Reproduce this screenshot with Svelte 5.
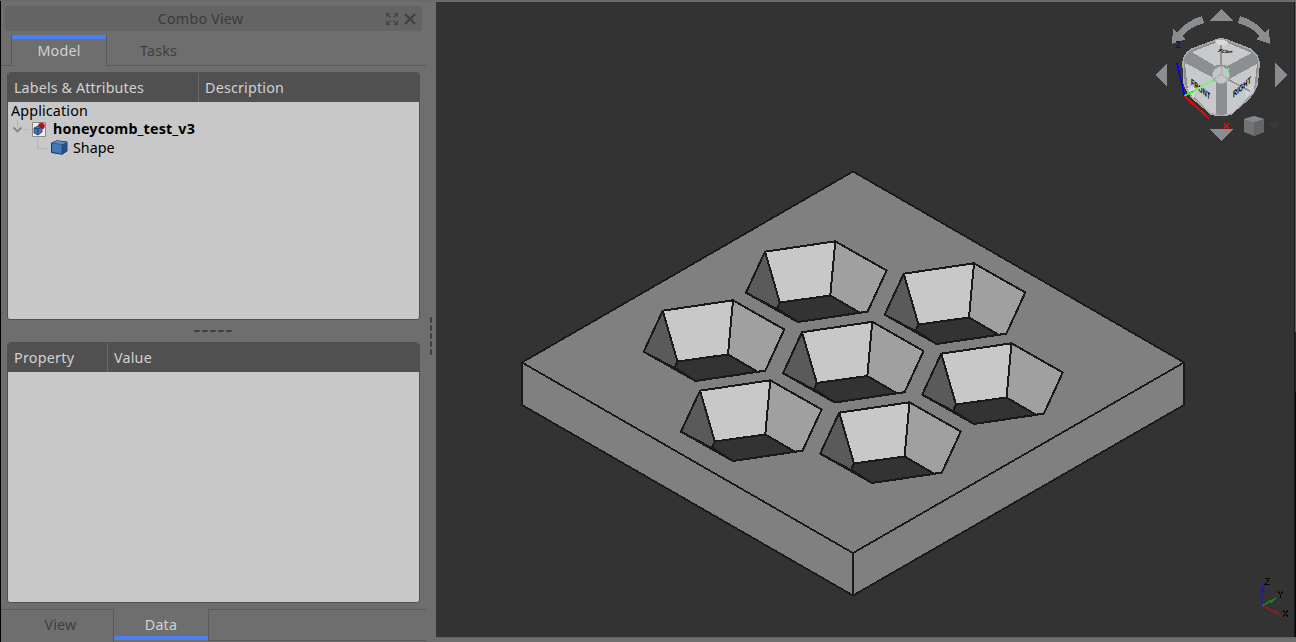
<script>
  const cells = [[102.3, -59], [241, -37], [0, 0], [139.3, 21.5], [278.5, 43], [37.3, 80], [176.5, 102]];
</script>

<div class="app">
  <aside>
    <header class="title"><span class="caption">Combo View</span>
      <svg class="float" width="12" height="12" viewBox="0 0 12 12"><path d="M.5 4V.5H4M.5 .5L4.500 4.500M8 .5H11.500V4M11.500 .5L7.500 4.500M.5 8V11.500H4M.5 11.500L4.500 7.500M8 11.500H11.500V8M11.500 11.500L7.500 7.500" /></svg>
      <svg class="close" width="12" height="12" viewBox="0 0 12 12"><path d="M1 1L11 11M11 1L1 11" /></svg>
    </header>
    <nav class="top"><div class="lead"></div><div class="tab active">Model</div><div class="tab rest">Tasks</div></nav>
    <section class="table tree">
      <div class="head"><div class="c1">Labels &amp; Attributes</div><div>Description</div></div>
      <div class="body">
        <div class="row app-row">Application</div>
        <div class="row doc">
          <svg width="45" height="38" viewBox="0 0 45 38">
            <path d="M9.5 0V8M15 9.500H20M29.500 18V28.500H40" stroke="#b4b4b4" fill="none" />
            <path d="M5.500 7.500L9.500 11.500L13.500 7.500" stroke="#858585" stroke-width="1.9" fill="none" />
            <path d="M24.500 2.500H37.500V16.500H24.500Z" fill="#eee" stroke="#888" />
            <circle cx="33.500" cy="6" r="3.300" fill="#c90e16" />
            <path d="M26 8L30 6L34 7V12L30 15L26 13Z" fill="#4675b0" stroke="#152c50" stroke-width=".7" />
            <path d="M26 8L30 9L34 7M30 9V15" stroke="#152c50" stroke-width=".7" fill="none" />
          </svg>
          <strong>honeycomb_test_v3</strong>
        </div>
        <div class="row shape">
          <svg width="17" height="15" viewBox="0 0 17 15">
            <path d="M.5 3L6 .8L16 2V11L11 14.300L.5 12.500Z" fill="#427ab7" stroke="#17355f" />
            <path d="M1 3L6 1L15.500 2.300L11 4.500Z" fill="#6390c0" /><path d="M11 4.500L15.500 2.300V11L11 14Z" fill="#234f8d" />
            <path d="M1 3L11 4.500V14" fill="none" stroke="#204777" stroke-width=".7" />
          </svg><span>Shape</span>
        </div>
      </div>
    </section>
    <div class="grip"><i></i><i></i><i></i><i></i><i></i></div>
    <section class="table props"><div class="head"><div class="c1">Property</div><div>Value</div></div><div class="body"></div></section>
    <nav class="bottom"><div class="tab view">View</div><div class="tab data">Data</div><div class="rest"></div></nav>
  </aside>
  <div class="splitter"><i></i><i></i><i></i><i></i><i></i></div>
  <main>
    <svg class="scene" width="858" height="635" viewBox="436 2 858 635">
      <g class="plate" shape-rendering="crispEdges">
        <path d="M853 171.500L1184 362.500V405L853 595.500L522 405V362.500Z" />
        <path d="M522 362.500L853 553L1184 362.500M853 553V595.500" />
      </g>
      {#each cells as [x, y]}
        <g class="cell" transform={`translate(${x} ${y})`} shape-rendering="crispEdges">
          <path fill="#333333" d="M677.500 361.500L728 354.500L757.500 371.700L695.500 381L674.500 367.500Z" />
          <path fill="#5a5a5a" d="M662.700 310.700L677.500 361.500L674.500 368L643.700 351.700Z" />
          <path fill="#c8c8c8" d="M662.700 310.700L733 300.300L728 354.500L677.500 361.500Z" />
          <path fill="#a0a0a0" d="M733 300.300L784.300 329.500L765.300 370.700L757.500 371.700L728 354.500Z" />
          <path fill="none" d="M662.700 310.700L733 300.300L784.300 329.500L765.300 370.700L695.500 381L643.700 351.700Z" />
        </g>
      {/each}
      <g fill="#898d8f" shape-rendering="crispEdges">
        <path d="M1221.500 9L1233 21H1210ZM1221.500 141L1210 129H1233ZM1155.500 75L1167 64V86ZM1287 75L1275 63V87Z" />
        <path d="M1202 16L1204 23Q1190 27 1182 36L1186 39L1172 44L1173 29L1177 32Q1188 20 1202 16Z" />
        <path d="M1240 16L1238 23Q1252 27 1260 36L1256 39L1270 44L1269 29L1265 32Q1254 20 1240 16Z" />
      </g>
      <g shape-rendering="crispEdges">
        <path d="M1216 40Q1221 38 1227 40L1250 49Q1260 55 1259 66L1257 85Q1253 96 1245 102L1231 114Q1221 117 1211 114L1196 101Q1187 94 1184 83L1183 63Q1183 54 1192 49Z" fill="#8b8f91" stroke="#a9abac" stroke-width="1.500" />
        <path d="M1192 52L1215 43Q1221 40 1228 43L1252 53L1227 66Q1221 63 1215 66ZM1185 63L1214 78Q1217 82 1216 85V114L1210 113L1188 91ZM1257 64L1229 79Q1226 82 1227 85V114L1232 113L1254 91Z" fill="#c8c9cb" />
        <path d="M1215 41Q1221 38 1228 42L1224 46H1219ZM1187 88L1195 87L1194 99ZM1253 87L1246 89L1246 98Z" fill="#d8d9da" />
        <path d="M1221 45V69M1227 79L1250 91M1215 79L1189 94" stroke="#929292" stroke-width="1.500" />
        <circle cx="1221" cy="75" r="8.500" fill="#c3c5c6" stroke="#a3a5a6" />
        <path d="M1221 67V74L1214 79M1221 74L1228 79" fill="none" stroke="#aaaeb0" />
      </g>
      <g class="face" fill="#000">
        <text transform="matrix(1 .16 -.7 .5 1216 51.500)" font-size="7">TOP</text>
        <text transform="matrix(.76 .62 0 1.15 1191 84.500)" font-size="8" textLength="25" lengthAdjust="spacingAndGlyphs">FRONT</text>
        <text transform="matrix(.82 -.72 0 1.15 1233 98)" font-size="8" textLength="22" lengthAdjust="spacingAndGlyphs">RIGHT</text>
      </g>
      <g fill="none" shape-rendering="crispEdges" stroke-width="1.700">
        <path d="M1184.500 96L1177 63" stroke="#00f" /><path d="M1184.500 96L1209 118.500" stroke="red" />
        <path d="M1184.500 96L1194 91" stroke="#19ff19" /><path d="M1194 91L1213 80" stroke="#78f578" />
        <path d="M1176 41.500H1180.500L1176.500 47.500H1181" stroke="#00d" stroke-width="1" />
        <path d="M1224 68L1226.500 71.500L1229 68M1226.500 71V75" stroke="#80ef9b" stroke-width="1" />
        <path d="M1224 123L1229 129M1229 123L1224 129" stroke="red" stroke-width="1.300" />
      </g>
      <path d="M1244 119L1254 116L1264 119V132L1254 136L1244 132Z" fill="#707476" /><path d="M1244 119L1254 116L1264 119L1254 122.500Z" fill="#85898b" /><path d="M1254 122.500L1264 119V132L1254 136Z" fill="#626668" />
      <path d="M1268 123H1280L1274 129Z" fill="#3a3b3d" />
      <g fill="none" shape-rendering="crispEdges">
        <path d="M1262.500 605V585" stroke="#202080" stroke-width="1.500" /><path d="M1260 592L1262.500 584L1265 592Z" fill="#202080" />
        <path d="M1262.500 605.500L1281 616" stroke="#892020" stroke-width="1.500" /><path d="M1273 612L1275 609L1281 616Z" fill="#892020" />
        <path d="M1262.500 605.500L1276 598" stroke="#208020" stroke-width="1.500" /><path d="M1268 601L1276 598L1271 604Z" fill="#208020" />
        <path d="M1265 578.500H1269.500L1265 584.500H1270M1278 591L1280.500 594.500L1283 591M1280.500 594V598M1283 610L1288 617M1288 610L1283 617" stroke="#090909" />
      </g>
    </svg>
    <div class="edge"></div>
  </main>
</div>

<style>
  :global(body) { margin: 0; overflow: hidden; background: #6e6e6e; }
  * { box-sizing: border-box; }
  .app { display: flex; width: 1296px; height: 642px; overflow: hidden; background: #6e6e6e; color: #d2d2d2; font: 14.3px/20px "Noto Sans", "Open Sans", sans-serif; border-top: 1px solid #696969; }
  aside { display: flex; flex-direction: column; width: 426px; border-left: 1px solid #000; }
  .title { display: flex; align-items: center; height: 25px; margin: 5px 4px 0 4px; background: #646464; border-radius: 3px; color: #3b3b3b; }
  .caption { flex: 1; text-align: center; padding-left: 10px; letter-spacing: .2px; }
  .title svg { fill: none; }
  .float { stroke: #454545; stroke-width: 1.4; margin-right: 6px; }
  .close { stroke: #414141; stroke-width: 2.4; margin-right: 6px; }
  nav { display: flex; }
  .top { height: 31px; margin-top: 4px; }
  .lead { width: 10px; border-bottom: 1px solid #5a5a5a; }
  .tab { text-align: center; letter-spacing: .2px; }
  .active { width: 96px; border: solid #5a5a5a; border-width: 0 1px; box-shadow: inset 0 4px #4a80f4; padding-top: 6px; }
  .rest { flex: 1; border-bottom: 1px solid #5a5a5a; color: #3e3e3e; }
  .top .rest { padding: 6px 0 0 33px; text-align: left; }
  .table { margin-left: 6px; width: 413px; border: 1px solid #505050; border-radius: 3px; background: #c8c8c8; overflow: hidden; }
  .tree { height: 248px; margin-top: 6px; }
  .head { display: flex; height: 30px; background: #505050; line-height: 31px; margin-top: -1px; letter-spacing: .2px; }
  .head div { padding-left: 6px; }
  .tree .c1 { width: 191px; border-right: 1px solid #6a6a6a; letter-spacing: .13px; }
  .props .c1 { width: 100px; border-right: 1px solid #6a6a6a; letter-spacing: .27px; }
  .body { color: #000; }
  .row { height: 18.500px; line-height: 18px; display: flex; }
  .app-row { height: 17.500px; padding-left: 3px; letter-spacing: .15px; }
  .doc svg { flex: none; overflow: visible; height: 38px; }
  .doc strong { font-size: 14.300px; letter-spacing: .15px; }
  .shape { padding-left: 43px; line-height: 19px; }
  .shape span { padding-left: 5px; }
  .shape svg { margin-top: 2px; }
  .grip { height: 22px; padding-right: 1px; display: flex; justify-content: center; align-items: center; gap: 2px; }
  .grip i { width: 6px; height: 2px; background: #414141; border-radius: 1px; }
  .props { height: 261px; }
  .bottom { height: 33px; margin-top: 6px; }
  .bottom .tab { line-height: 31px; }
  .view { width: 113px; border: solid #5a5a5a; border-width: 1px 1px 0 0; color: #3e3e3e; padding-left: 7px; }
  .bottom .view { line-height: 29px; }
  .data { width: 94px; height: 31px; border-bottom: 4px solid #4a80f4; }
  .bottom .rest { border: 1px solid #5a5a5a; border-right: 0; height: 32px; }
  .splitter { width: 10px; display: flex; flex-direction: column; align-items: center; padding: 316px 0 0; gap: 2px; }
  .splitter i { height: 6px; width: 2px; background: #414141; border-radius: 1px; }
  main { display: flex; width: 860px; height: 636px; margin-top: 1px; background: #333; border-bottom: 1px solid #626262; }
  .scene { display: block; flex: none; }
  .edge { width: 2px; border-left: 1px solid #141821; background: linear-gradient(#59627c 0 330px, #202631 330px 390px, #080808 390px); }
  .plate path { fill: #808080; stroke: #1a1a1a; stroke-width: 1.800; }
  .plate path:last-child { fill: none; }
  .cell path { stroke: #1a1a1a; stroke-width: 2; stroke-linejoin: round; }
  .face { font-family: "Liberation Sans", sans-serif; font-weight: 700; }
</style>
